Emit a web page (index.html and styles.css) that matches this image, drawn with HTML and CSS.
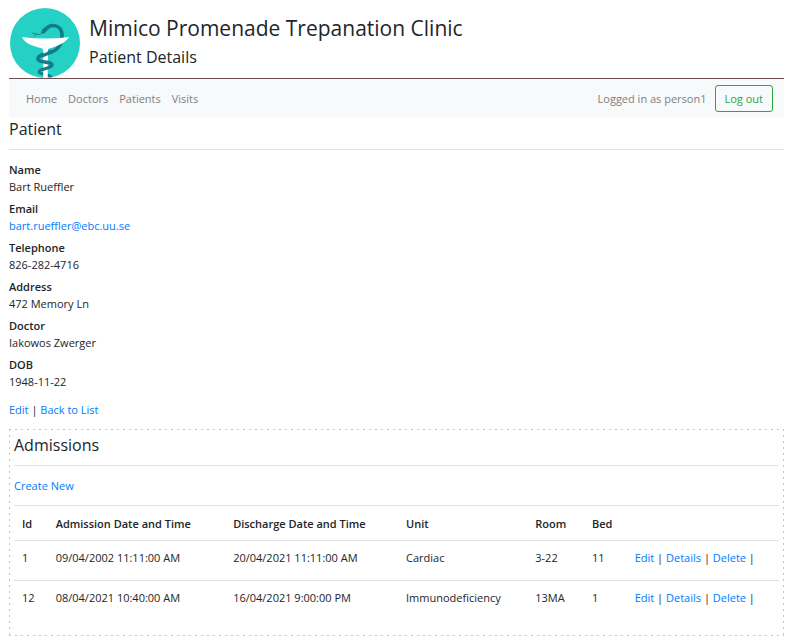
FILE: index.html
```html
<!DOCTYPE html>
<html lang="en">
<head>
<meta charset="utf-8">
<meta name="viewport" content="width=device-width, initial-scale=1">
<title>Patient Details - Mimico Promenade Trepanation Clinic</title>
<link rel="stylesheet" href="styles.css">
</head>
<body>
<header class="masthead">
  <svg class="logo" viewBox="0 0 70 70" aria-hidden="true">
    <defs><clipPath id="disc"><circle cx="35" cy="35" r="35"/></clipPath></defs>
    <g clip-path="url(#disc)">
      <rect width="70" height="70" fill="#24d1c4"/>
      <path d="M36 21C41 15 51 17 52 26C53 36 48 41 42 44C36 46 28 47 28 51" fill="none" stroke="#117c8c" stroke-width="3.6"/>
      <path d="M31 25C32 20 35 18 39 20L36 24C34 26 32 26 31 25Z" fill="#117c8c"/>
      <path d="M32 25C30 28 28 26 22 25M27 26L24 28" fill="none" stroke="#117c8c" stroke-width=".8"/>
      <path d="M42 57C42 60 29 60 29 64C29 67 41 65 42 71" fill="none" stroke="#117c8c" stroke-width="3"/>
      <path d="M12 29Q35 32 59 29C54 37 43 39 38 41L37.500 70H33.500L33 41C27 38 16 38 12 29Z" fill="#fff"/>
      <path d="M42 43C36 46 28 47 28 51C28 55 42 53 42 57" fill="none" stroke="#117c8c" stroke-width="3.400"/>
      <path d="M33.700 40H37.700L37.500 50H33.700Z" fill="#fff"/>
      <path d="M39 45L32 48M42 57C42 60 35 60 32 62" fill="none" stroke="#117c8c" stroke-width="3"/>
      <path d="M33.500 63H37.500V70H33.500Z" fill="#fff"/>
    </g>
  </svg>
  <div>
    <h1>Mimico Promenade Trepanation Clinic</h1>
    <h2>Patient Details</h2>
  </div>
</header>
<nav class="navbar">
  <ul class="nav-links">
    <li><a href="#">Home</a></li>
    <li><a href="#">Doctors</a></li>
    <li><a href="#">Patients</a></li>
    <li><a href="#">Visits</a></li>
  </ul>
  <span>Logged in as person1</span>
  <button class="logout" type="button">Log out</button>
</nav>
<main>
  <section>
    <h3>Patient</h3>
    <hr>
    <dl class="details">
      <dt>Name</dt><dd>Bart Rueffler</dd>
      <dt>Email</dt><dd><a href="mailto:bart.rueffler@ebc.uu.se">bart.rueffler@ebc.uu.se</a></dd>
      <dt>Telephone</dt><dd>826-282-4716</dd>
      <dt>Address</dt><dd>472 Memory Ln</dd>
      <dt>Doctor</dt><dd>Iakowos Zwerger</dd>
      <dt>DOB</dt><dd>1948-11-22</dd>
    </dl>
    <p class="actions"><a href="#">Edit</a> | <a href="#">Back to List</a></p>
  </section>
  <section class="admissions">
    <h3>Admissions</h3>
    <hr>
    <p class="create"><a href="#">Create New</a></p>
    <table>
      <colgroup><col class="id"><col class="admitted"><col class="discharged"><col class="unit"><col class="room"><col class="bed"><col></colgroup>
      <thead>
        <tr><th>Id</th><th>Admission Date and Time</th><th>Discharge Date and Time</th><th>Unit</th><th>Room</th><th>Bed</th><th></th></tr>
      </thead>
      <tbody>
        <tr><td>1</td><td>09/04/2002 11:11:00 AM</td><td>20/04/2021 11:11:00 AM</td><td>Cardiac</td><td>3-22</td><td>11</td><td><a href="#">Edit</a> | <a href="#">Details</a> | <a href="#">Delete</a> |</td></tr>
        <tr><td>12</td><td>08/04/2021 10:40:00 AM</td><td>16/04/2021 9:00:00 PM</td><td>Immunodeficiency</td><td>13MA</td><td>1</td><td><a href="#">Edit</a> | <a href="#">Details</a> | <a href="#">Delete</a> |</td></tr>
      </tbody>
    </table>
  </section>
</main>
</body>
</html>
```
FILE: styles.css
```css
* { box-sizing: border-box; }
body {
  margin: 8px 6px 8px 9px;
  font: 11px/17px "Open Sans", "Noto Sans", sans-serif;
  color: #212529;
  background: #fff;
}
h1, h2, h3, p, ul, dl, dd { margin: 0; }
h1, h2, h3 { font-weight: 400; }
h1 { font-size: 21px; line-height: 28px; margin-top: 6px; }
h2 { font-size: 16px; line-height: 20px; margin-top: 5px; }
h3 { font-size: 16px; line-height: 20px; }
a { color: #007bff; text-decoration: none; }
hr { height: 1px; border: 0; margin: 10px 0 11px; background: #e3e3e4; }

.masthead {
  display: flex;
  gap: 9px;
  padding-left: 1px;
  border-bottom: 1px solid #6f4e4e;
}
.logo { display: block; width: 70px; height: 70px; flex: none; }

.navbar {
  display: flex;
  align-items: center;
  gap: 8px;
  height: 39px;
  padding: 0 11px 0 17px;
  background: #f8f9fa;
  color: #808081;
}
.nav-links {
  display: flex;
  gap: 11px;
  flex: 1;
  padding: 0;
  list-style: none;
}
.nav-links a { color: inherit; }
.logout {
  height: 27px;
  padding: 0 9px;
  border: 1px solid #28a745;
  border-radius: 3px;
  background: transparent;
  color: #28a745;
  font: inherit;
}

main { padding-top: 1px; }
dt, th { font-weight: 600; }
dd { margin-bottom: 5px; }
.actions { margin-top: 11px; }

/* Two-pixel dashes with four-pixel gaps on all four edges */
.admissions {
  --dash-x: repeating-linear-gradient(to right, #a2dea2 0 2px, transparent 2px 6px);
  --dash-y: repeating-linear-gradient(to bottom, #a2dea2 0 2px, transparent 2px 6px);
  margin-top: 11px;
  padding: 6px 5px 16px;
  background:
    var(--dash-x) top / 100% 1px no-repeat,
    var(--dash-x) bottom / 100% 1px no-repeat,
    var(--dash-y) left / 1px 100% no-repeat,
    var(--dash-y) right / 1px 100% no-repeat;
}
.create { margin-bottom: 11px; }
table {
  width: 100%;
  table-layout: fixed;
  border-collapse: collapse;
}
th, td {
  padding: 9px 8px 8px;
  border-top: 1px solid #dee2e6;
  text-align: left;
  vertical-align: top;
  white-space: nowrap;
}
td { padding: 8px 8px 14px; }
.id { width: 4.4%; }
.admitted { width: 23.2%; }
.discharged { width: 22.6%; }
.unit { width: 16.9%; }
.room { width: 7.4%; }
.bed { width: 5.6%; }
```
